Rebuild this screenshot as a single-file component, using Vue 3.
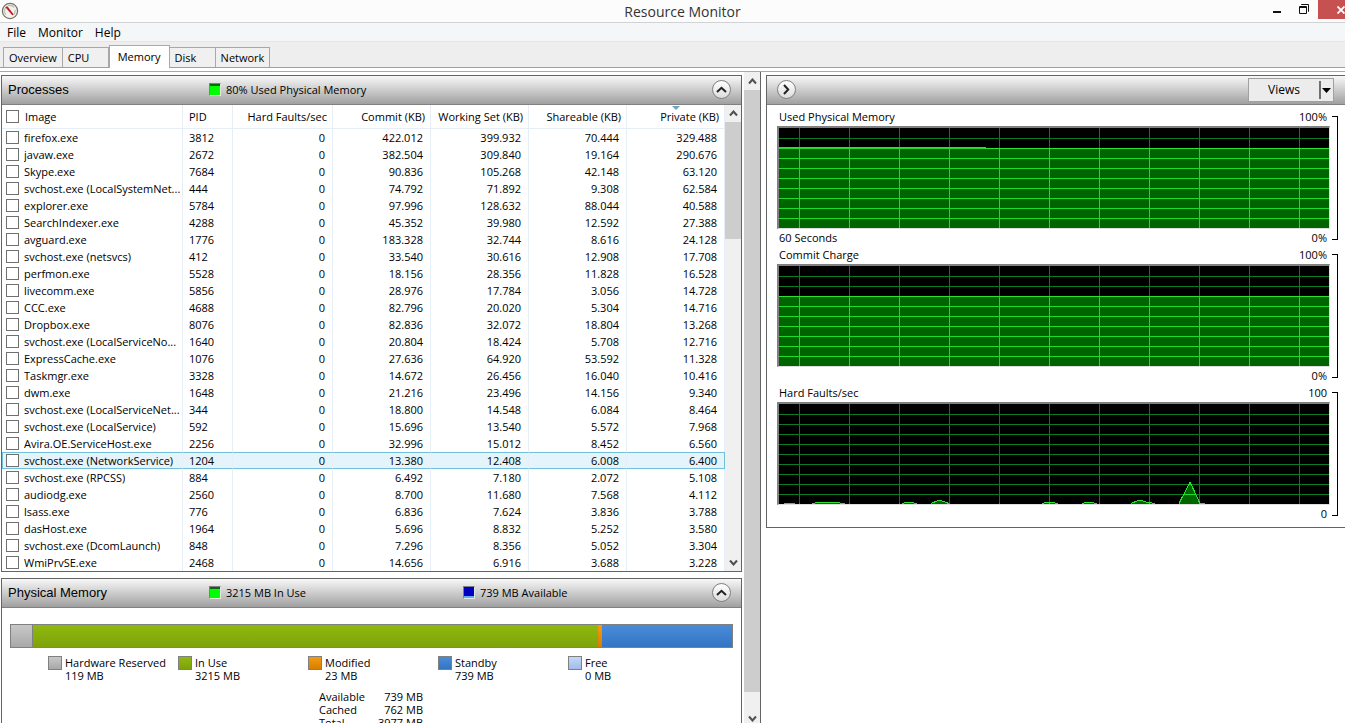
<template>
  <div class="window">
    <header class="title-bar">
      <svg class="app-icon" viewBox="0 0 18 18">
        <circle cx="9" cy="9" r="7.6" fill="#f4f2ee" stroke="#77736e" stroke-width="1.3" />
        <path d="M5 12.6A5.4 5.4 0 0 1 5 5.4M7 3.8A5.4 5.4 0 0 1 13 5.4M13 12.6A5.4 5.4 0 0 0 14 8" fill="none" stroke="#a9c3a4" stroke-width="1.2" />
        <path d="M4.2 5 6.4 4.2 12.8 12.4 11.2 13.2Z" fill="#c01c2c" />
      </svg>
      <h1>Resource Monitor</h1>
      <div class="window-buttons">
        <button aria-label="Minimize">
          <svg width="10" height="12" viewBox="0 0 10 12"><path d="M0 7h8v2H0z" fill="#111" /></svg>
        </button>
        <button aria-label="Restore">
          <svg width="11" height="11" viewBox="0 0 11 11" fill="none" stroke="#111">
            <path d="M2.5 1V.5h7v7H9" />
            <path d="M.5 2.5h7v7h-7z" />
            <path d="M0 3.5h8" />
          </svg>
        </button>
        <button class="close" aria-label="Close">
          <svg width="8" height="8" viewBox="0 0 8 8"><path d="M.5.5l7 7M7.5.5l-7 7" stroke="#fff" stroke-width="1.8" /></svg>
        </button>
      </div>
    </header>

    <nav class="menu">
      <a v-for="item in menu" :key="item" href="#">{{ item }}</a>
    </nav>

    <div class="tabs">
      <button
        v-for="tab in tabs"
        :key="tab"
        :class="{ active: tab === activeTab }"
        @click="activeTab = tab"
      >{{ tab }}</button>
    </div>

    <main class="content">
      <div class="left-pane">
        <div class="panels">
          <section class="panel">
            <div class="panel-header">
              <h2>Processes</h2>
              <span class="stat"><i class="meter green"></i>80% Used Physical Memory</span>
              <button class="round" aria-label="Collapse processes" @click="showProcesses = !showProcesses">
                <svg width="11" height="7" viewBox="0 0 11 7"><path d="M1 6l4.500-4.200L10 6" /></svg>
              </button>
            </div>
            <div v-show="showProcesses" class="process-list">
              <table>
                <thead>
                  <tr>
                    <th class="image">
                      <label><input v-model="allChecked" type="checkbox">Image</label>
                    </th>
                    <th class="pid">PID</th>
                    <th class="faults">Hard Faults/sec</th>
                    <th>Commit (KB)</th>
                    <th>Working Set (KB)</th>
                    <th>Shareable (KB)</th>
                    <th class="sorted">Private (KB)</th>
                  </tr>
                </thead>
                <tbody>
                  <tr
                    v-for="p in processes"
                    :key="p[1]"
                    :class="{ selected: p[1] === selectedPid }"
                    @click="selectedPid = p[1]"
                  >
                    <td class="image">
                      <label><input v-model="checked" type="checkbox" :value="p[1]"><span>{{ p[0] }}</span></label>
                    </td>
                    <td class="pid">{{ p[1] }}</td>
                    <td>0</td>
                    <td v-for="n in 4" :key="n">{{ p[n + 1] }}</td>
                  </tr>
                </tbody>
              </table>
              <div class="scrollbar">
                <button aria-label="Scroll up"><svg viewBox="0 0 9 7"><path d="M1 5.500l3.500-4 3.500 4" /></svg></button>
                <div class="thumb list-thumb"></div>
                <div class="track list-track"></div>
                <button aria-label="Scroll down"><svg viewBox="0 0 9 7"><path d="M1 1.500l3.500 4 3.500-4" /></svg></button>
              </div>
            </div>
          </section>

          <section class="panel memory-panel">
            <div class="panel-header">
              <h2>Physical Memory</h2>
              <span class="stat"><i class="meter green"></i>3215 MB In Use</span>
              <span class="stat"><i class="meter blue"></i>739 MB Available</span>
              <button class="round" aria-label="Collapse physical memory" @click="showMemory = !showMemory">
                <svg width="11" height="7" viewBox="0 0 11 7"><path d="M1 6l4.500-4.200L10 6" /></svg>
              </button>
            </div>
            <div v-show="showMemory" class="memory">
              <div class="memory-bar">
                <div
                  v-for="m in barParts"
                  :key="m.name"
                  :class="m.color"
                  :style="{ flexGrow: m.mb }"
                ></div>
              </div>
              <ul class="legend">
                <li v-for="m in memory" :key="m.name">
                  <i :class="m.color"></i>
                  <span>{{ m.name }}<br>{{ m.mb }} MB</span>
                </li>
              </ul>
              <dl class="totals">
                <dt>Available</dt><dd>739 MB</dd>
                <dt>Cached</dt><dd>762 MB</dd>
                <dt>Total</dt><dd>3977 MB</dd>
              </dl>
            </div>
          </section>
        </div>
        <div class="scrollbar pane-scrollbar">
          <button aria-label="Scroll up"><svg viewBox="0 0 9 7"><path d="M1 5.500l3.500-4 3.500 4" /></svg></button>
          <div class="thumb pane-thumb"></div>
          <div class="track pane-track"></div>
          <button class="pane-down" aria-label="Scroll down"><svg viewBox="0 0 9 7"><path d="M1 1.500l3.500 4 3.500-4" /></svg></button>
        </div>
      </div>

      <div class="right-pane">
        <section class="panel graphs">
          <div class="panel-header">
            <button class="round" aria-label="Hide graphs">
              <svg width="7" height="11" viewBox="0 0 7 11"><path d="M1 1l4.200 4.500L1 10" /></svg>
            </button>
            <button class="views">
              <span>Views</span>
              <svg width="14" height="18" viewBox="0 0 14 18">
                <path d="M1 0v18" stroke="#707070" stroke-width="2" />
                <path d="M3 7h9L7.500 12z" fill="#000" />
              </svg>
            </button>
          </div>
          <div class="graph-list">
            <div v-for="(g, i) in graphs" :key="g.title" class="graph">
              <div class="graph-main">
                <div class="caption"><span>{{ g.title }}</span><span>{{ g.max }}</span></div>
                <svg class="chart" viewBox="0 0 550 100" preserveAspectRatio="none" shape-rendering="crispEdges">
                  <defs>
                    <clipPath :id="'area' + i"><polygon :points="area(g)" /></clipPath>
                  </defs>
                  <path :d="grid" fill="none" stroke="#0c7a20" />
                  <polygon :points="area(g)" fill="#006400" />
                  <path :d="grid" fill="none" stroke="#1fdc2c" :clip-path="`url(#area${i})`" />
                  <polyline v-for="line in g.lines" :key="line" :points="line" fill="none" stroke="#28e432" />
                </svg>
                <div class="caption foot"><span>{{ g.note }}</span><span>{{ g.min }}</span></div>
              </div>
              <div class="bracket"></div>
            </div>
          </div>
        </section>
      </div>
    </main>
  </div>
</template>

<script setup>
import { ref, computed } from 'vue';

const menu = ['File', 'Monitor', 'Help'];
const tabs = ['Overview', 'CPU', 'Memory', 'Disk', 'Network'];
const activeTab = ref('Memory');
const showProcesses = ref(true);
const showMemory = ref(true);
const selectedPid = ref(1204);
const checked = ref([]);

// name, pid, commit, working set, shareable, private
const processes = [
  ['firefox.exe', 3812, '422.012', '399.932', '70.444', '329.488'],
  ['javaw.exe', 2672, '382.504', '309.840', '19.164', '290.676'],
  ['Skype.exe', 7684, '90.836', '105.268', '42.148', '63.120'],
  ['svchost.exe (LocalSystemNet...', 444, '74.792', '71.892', '9.308', '62.584'],
  ['explorer.exe', 5784, '97.996', '128.632', '88.044', '40.588'],
  ['SearchIndexer.exe', 4288, '45.352', '39.980', '12.592', '27.388'],
  ['avguard.exe', 1776, '183.328', '32.744', '8.616', '24.128'],
  ['svchost.exe (netsvcs)', 412, '33.540', '30.616', '12.908', '17.708'],
  ['perfmon.exe', 5528, '18.156', '28.356', '11.828', '16.528'],
  ['livecomm.exe', 5856, '28.976', '17.784', '3.056', '14.728'],
  ['CCC.exe', 4688, '82.796', '20.020', '5.304', '14.716'],
  ['Dropbox.exe', 8076, '82.836', '32.072', '18.804', '13.268'],
  ['svchost.exe (LocalServiceNo...', 1640, '20.804', '18.424', '5.708', '12.716'],
  ['ExpressCache.exe', 1076, '27.636', '64.920', '53.592', '11.328'],
  ['Taskmgr.exe', 3328, '14.672', '26.456', '16.040', '10.416'],
  ['dwm.exe', 1648, '21.216', '23.496', '14.156', '9.340'],
  ['svchost.exe (LocalServiceNet...', 344, '18.800', '14.548', '6.084', '8.464'],
  ['svchost.exe (LocalService)', 592, '15.696', '13.540', '5.572', '7.968'],
  ['Avira.OE.ServiceHost.exe', 2256, '32.996', '15.012', '8.452', '6.560'],
  ['svchost.exe (NetworkService)', 1204, '13.380', '12.408', '6.008', '6.400'],
  ['svchost.exe (RPCSS)', 884, '6.492', '7.180', '2.072', '5.108'],
  ['audiodg.exe', 2560, '8.700', '11.680', '7.568', '4.112'],
  ['lsass.exe', 776, '6.836', '7.624', '3.836', '3.788'],
  ['dasHost.exe', 1964, '5.696', '8.832', '5.252', '3.580'],
  ['svchost.exe (DcomLaunch)', 848, '7.296', '8.356', '5.052', '3.304'],
  ['WmiPrvSE.exe', 2468, '14.656', '6.916', '3.688', '3.228'],
];

const allChecked = computed({
  get: () => checked.value.length === processes.length,
  set: (on) => { checked.value = on ? processes.map((p) => p[1]) : []; },
});

const memory = [
  { name: 'Hardware Reserved', mb: 119, color: 'reserved' },
  { name: 'In Use', mb: 3215, color: 'in-use' },
  { name: 'Modified', mb: 23, color: 'modified' },
  { name: 'Standby', mb: 739, color: 'standby' },
  { name: 'Free', mb: 0, color: 'free' },
];
const barParts = memory.filter((m) => m.mb > 0);

const graphs = [
  {
    title: 'Used Physical Memory', max: '100%', min: '0%', note: '60 Seconds',
    lines: ['0,19.5 206,19.5 206,20.5 550,20.5'],
  },
  {
    title: 'Commit Charge', max: '100%', min: '0%', note: '',
    lines: ['0,30.5 550,30.5'],
  },
  {
    title: 'Hard Faults/sec', max: '100', min: '0', note: '',
    lines: [
      '5,99.5 16,99.5',
      '33,99.5 39,98.5 56,98.5 66,99.5',
      '123,99.5 130,98 138,99.5',
      '152,99.5 160,96 170,99.5',
      '263,99.5 270,98 279,99.5',
      '303,99.5 310,98 318,99.5',
      '352,99.5 360,96 369,98.5 376,99.5',
      '400,99.5 411,78 421,99.5 426,99.5',
    ],
  },
];

// the filled area closes every line down to the base of the chart
function area(g) {
  const points = g.lines.join(' ').split(' ');
  const first = points[0].split(',')[0];
  const last = points[points.length - 1].split(',')[0];
  return `${first},100 ${points.join(' ')} ${last},100`;
}

let grid = '';
for (let y = 10; y < 100; y += 10) grid += `M0 ${y + 0.5}H550`;
for (let x = 20; x < 550; x += 50) grid += `M${x + 0.5} 0V100`;
</script>

<style>
html, body {
  margin: 0;
  background: #fff;
}
</style>

<style scoped>
.window {
  display: flex;
  flex-direction: column;
  height: 100vh;
  overflow: hidden;
  background: #fff;
  color: #000;
  font: 11px/13px "Open Sans", "Noto Sans", sans-serif;
}
button {
  padding: 0;
  border: none;
  background: none;
  font: inherit;
  color: inherit;
}
h1, h2, ul, dl, dd {
  margin: 0;
  padding: 0;
  font-weight: normal;
}

/* title bar */
.title-bar {
  display: grid;
  grid-template-columns: 1fr auto 1fr;
  align-items: start;
  height: 22px;
  flex: none;
  background: #fcfcfc;
  border-bottom: 1px solid #cfd3d6;
}
.app-icon {
  width: 18px;
  height: 18px;
  margin: 2px 0 0 1px;
}
.title-bar h1 {
  margin-left: 20px;
  font-size: 14px;
  line-height: 23px;
  color: #333;
}
.window-buttons {
  display: flex;
  justify-content: flex-end;
}
.window-buttons button {
  display: flex;
  align-items: flex-start;
  justify-content: center;
  width: 27px;
  height: 19px;
  padding-top: 4px;
}
.window-buttons button svg {
  flex: none;
}
.window-buttons .close {
  box-sizing: border-box;
  padding: 6px 0 0 18px;
  background: #c75050;
}

.menu {
  display: flex;
  gap: 12px;
  height: 18px;
  flex: none;
  padding-left: 7px;
  background: #f5f6f7;
  border-bottom: 1px solid #e4e6e8;
  font-size: 12px;
  line-height: 19px;
}
.menu a {
  color: #000;
  text-decoration: none;
}

.tabs {
  display: flex;
  align-items: flex-end;
  height: 25px;
  flex: none;
  padding-left: 3px;
  background: #eeeeee;
  border-bottom: 1px solid #a0a0a0;
}
.tabs button {
  box-sizing: border-box;
  height: 20px;
  min-width: 46px;
  padding: 1px 5px 0;
  border: 1px solid #a8a8a8;
  border-bottom: none;
  border-left-width: 0;
  background: #f0f0f0;
  text-align: left;
  line-height: 18px;
}
.tabs button:first-child {
  border-left-width: 1px;
}
.tabs button.active {
  height: 23px;
  margin-bottom: -1px;
  padding: 0 8px;
  border-left-width: 1px;
  background: #fff;
}

/* the two panes */
.content {
  display: flex;
  flex: 1;
  min-height: 0;
  border-top: 1px solid #a8a8a8;
  margin-top: 3px;
}
.left-pane {
  display: flex;
  flex: 0 1 760px;
  min-width: 0;
  border-right: 1px solid #646464;
}
.right-pane {
  flex: 1;
  min-width: 300px;
  padding: 3px 0 0 5px;
}
.panels {
  display: flex;
  flex-direction: column;
  gap: 6px;
  flex: 1;
  min-width: 0;
  padding: 3px 2px 0 1px;
  overflow: hidden;
}
.panel {
  flex: none;
  border: 1px solid #646464;
}
.memory-panel {
  flex: 1 0 auto;
}
.panel-header {
  display: flex;
  align-items: center;
  box-sizing: border-box;
  height: 29px;
  padding: 0 10px 2px 6px;
  border-bottom: 1px solid #808080;
  background: linear-gradient(#f8f8f8, #a0a0a0);
}
.panel-header h2 {
  flex: none;
  width: 201px;
  font: 13px/17px "Liberation Sans", Arial, sans-serif;
}
.stat {
  display: flex;
  align-items: center;
  flex: none;
  width: 254px;
  gap: 5px;
}
.stat + .stat {
  width: auto;
}
.meter {
  box-sizing: border-box;
  width: 12px;
  height: 13px;
  border: 1px solid #e0e8e0;
  border-top-color: #808080;
  border-left-color: #808080;
}
.green {
  background: linear-gradient(#0a6414 2px, #00ff00 2px);
}
.blue {
  background: linear-gradient(#0000c0 9px, #6aa8ff 9px);
}
.round {
  display: flex;
  align-items: center;
  justify-content: center;
  box-sizing: border-box;
  width: 19px;
  height: 19px;
  margin-left: auto;
  border: 1px solid #808080;
  border-radius: 50%;
  background: linear-gradient(#fff, #dcdcdc);
}
.round path {
  fill: none;
  stroke: #222;
  stroke-width: 2;
}

/* process list */
.process-list {
  display: flex;
}
table {
  flex: 1;
  width: 100%;
  table-layout: fixed;
  border-collapse: separate;
  border-spacing: 0;
}
th, td {
  box-sizing: border-box;
  height: 17px;
  padding: 0 6px 0 0;
  border-right: 1px solid #e6eef8;
  font-weight: normal;
  line-height: 15px;
  text-align: right;
  white-space: nowrap;
}
td {
  padding-right: 7px;
}
th {
  position: relative;
  height: 24px;
  padding-right: 5px;
  border-bottom: 1px solid #e6eef8;
}
th.image {
  width: auto;
}
th:not(.image) {
  width: 98px;
}
th.pid:not(.image) {
  width: 50px;
}
th.faults:not(.image) {
  width: 100px;
}
.image, .pid {
  text-align: left;
}
.image {
  padding-right: 0;
}
td.pid, th.pid {
  padding-left: 6px;
}
.image label {
  display: flex;
  align-items: center;
  gap: 5px;
  padding-left: 4px;
}
th.image label {
  gap: 6px;
}
.image span {
  overflow: hidden;
}
.sorted::before {
  content: "";
  position: absolute;
  top: 1px;
  left: 45px;
  border: 4px solid transparent;
  border-top-color: #6aa6c8;
  border-bottom: none;
}
input[type="checkbox"] {
  appearance: none;
  box-sizing: border-box;
  flex: none;
  width: 13px;
  height: 13px;
  margin: 0;
  border: 1px solid #707070;
  background: #fff;
}
input[type="checkbox"]:checked {
  background: #3c3c3c;
  box-shadow: inset 0 0 0 2px #fff;
}
.selected td {
  height: 17px;
  border-top: 1px solid #70c0dc;
  border-bottom: 1px solid #70c0dc;
  background: #e5f3fb;
  line-height: 13px;
}
.selected td:first-child {
  box-shadow: inset 1px 0 #70c0dc;
}
.selected td:last-child {
  border-right-color: #70c0dc;
}

/* scrollbars */
.scrollbar {
  display: flex;
  flex-direction: column;
  flex: none;
  width: 16px;
  background: #f0f0f0;
}
.scrollbar button {
  display: flex;
  align-items: center;
  justify-content: center;
  flex: none;
  height: 17px;
}
.scrollbar svg {
  width: 9px;
  height: 7px;
}
.scrollbar path {
  fill: none;
  stroke: #505050;
  stroke-width: 2;
}
.thumb {
  background: #cdcdcd;
}
.list-thumb {
  flex: 117;
}
.list-track {
  flex: 315;
}
.pane-thumb {
  flex: 600;
}
.pane-track {
  flex: 21;
}
.pane-scrollbar button {
  height: 18px;
}
.pane-scrollbar .pane-down {
  height: 10px;
}

/* physical memory */
.memory {
  padding: 16px 8px 0;
}
.memory-bar {
  display: flex;
  height: 22px;
  border: 1px solid #808080;
}
.memory-bar .reserved {
  border-right: 1px solid #808080;
}
.reserved {
  background: linear-gradient(#c8c8c8, #a8a8a8);
}
.in-use {
  background: linear-gradient(#8fb90e, #7ea20a);
}
.modified {
  background: linear-gradient(#f59a10, #d87e00);
}
.standby {
  background: linear-gradient(#4a8cd8, #3474c4);
}
.free {
  background: linear-gradient(#c4d8f8, #a0bce8);
}
.legend {
  display: flex;
  padding: 8px 0 0 38px;
  list-style: none;
}
.legend li {
  display: flex;
  flex: 0 1 130px;
  gap: 3px;
  white-space: nowrap;
}
.legend i {
  box-sizing: border-box;
  flex: none;
  width: 14px;
  height: 14px;
  border: 1px solid #808080;
}
.totals {
  display: grid;
  grid-template-columns: 52px 52px;
  margin-top: 8px;
  padding-left: 309px;
}
.totals dd {
  text-align: right;
}

/* graphs */
.graphs {
  border-right: none;
}
.graphs .panel-header {
  justify-content: space-between;
  padding: 0 11px 1px 10px;
}
.graphs .round {
  margin-left: 0;
}
.views {
  display: flex;
  align-items: center;
  box-sizing: border-box;
  width: 86px;
  height: 24px;
  border: 1px solid #a0a0a0;
  background: #ececec;
  font-size: 12px;
}
.views span {
  flex: 1;
}
.graph-list {
  padding: 4px 7px 4px 10px;
}
.graph {
  display: flex;
  gap: 2px;
}
.graph-main {
  flex: 1;
  min-width: 0;
}
.caption {
  display: flex;
  justify-content: space-between;
  height: 17px;
  padding: 0 3px 0 2px;
  line-height: 15px;
}
.foot {
  height: 18px;
  line-height: 17px;
}
.chart {
  display: block;
  box-sizing: border-box;
  width: 100%;
  height: 103px;
  border: 1px solid #e0e0e0;
  border-top: 2px solid #808080;
  border-left: 2px solid #808080;
  background: #000;
}
.bracket {
  width: 5px;
  margin: 7px 0 7px;
  border: 1px solid #000;
  border-left: none;
}
</style>
